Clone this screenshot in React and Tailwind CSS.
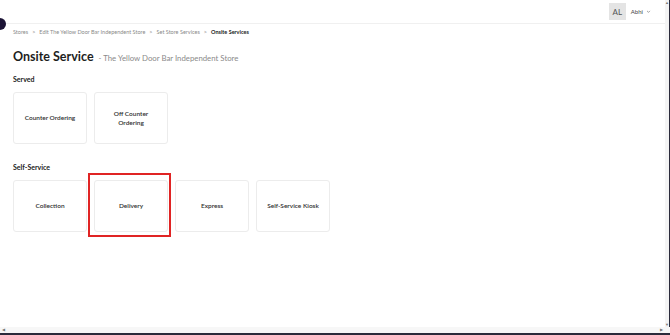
// Onsite Service picker - store services settings page

const SERVED = [
  { id: "counter", label: "Counter Ordering" },
  { id: "off-counter", label: "Off Counter Ordering", wrap: true },
];

const SELF_SERVICE = [
  { id: "collection", label: "Collection" },
  { id: "delivery", label: "Delivery", highlighted: true },
  { id: "express", label: "Express" },
  { id: "kiosk", label: "Self-Service Kiosk" },
];

const CRUMBS = [
  "Stores",
  "Edit The Yellow Door Bar Independent Store",
  "Set Store Services",
];

const ServiceCard = ({ label, wrap, highlighted }) => (
  <div className="relative">
    <div className="w-[74px] h-[52px] rounded-[3px] border border-[#ececec] bg-white flex items-center justify-center px-[2px]">
      <span
        className={`text-[6.5px] font-semibold text-[#2f2f2f] text-center leading-[9px] ${wrap ? "w-[40px]" : "whitespace-nowrap"}`}
      >
        {label}
      </span>
    </div>
    {/* annotation box */}
    {highlighted && (
      <div className="absolute -left-[6px] -right-[3px] -top-[7px] -bottom-[5px] border-2 border-[#e02424] pointer-events-none" />
    )}
  </div>
);

const Section = ({ title, items }) => (
  <div>
    <p className="text-[7px] font-bold text-[#222] leading-none">{title}</p>
    <div className="flex gap-[7px] mt-[9px]">
      {items.map((item) => (
        <ServiceCard key={item.id} {...item} />
      ))}
    </div>
  </div>
);

export default function App() {
  return (
    <div className="w-[670px] h-[335px] flex flex-col bg-white overflow-hidden font-['Lato','Liberation_Sans',sans-serif]">
      <div className="flex flex-1 min-h-0">
        <div className="relative flex-1 min-w-0">
          {/* Header */}
          <header className="h-[24px] border-b border-[#f0f0f0] flex items-center justify-end pr-[14px]">
            <div className="w-[17px] h-[17px] bg-[#e4e4e4] flex items-center justify-center text-[8px] text-[#555]">
              AL
            </div>
            <span className="ml-[5px] text-[6px] text-[#444]">Abhi</span>
            <svg
              className="ml-[3px] w-[5px] h-[5px] text-[#666]"
              fill="none"
              stroke="currentColor"
              viewBox="0 0 24 24"
            >
              <path strokeWidth={3} d="M5 9l7 7 7-7" />
            </svg>
          </header>

          {/* Sidebar toggle dot */}
          <div className="absolute -left-[6px] top-[18px] w-[12px] h-[12px] rounded-full bg-[#1b1335]" />

          <main className="pl-[13px] pt-[5px]">
            {/* Breadcrumb */}
            <nav className="flex items-center text-[5.5px] text-[#8a8a8a] h-[7px]">
              {CRUMBS.map((c) => (
                <span key={c} className="flex items-center">
                  <span>{c}</span>
                  <span className="mx-[4px]">&gt;</span>
                </span>
              ))}
              <span className="font-bold text-[#222]">Onsite Services</span>
            </nav>

            {/* Title */}
            <div className="flex items-baseline mt-[15px]">
              <h1 className="text-[12.5px] font-bold text-[#1e1e1e] leading-none">
                Onsite Service
              </h1>
              <span className="ml-[5px] text-[7.8px] text-[#8a8a8a]">
                - The Yellow Door Bar Independent Store
              </span>
            </div>

            <div className="mt-[11px] flex flex-col gap-[20px]">
              <Section title="Served" items={SERVED} />
              <Section title="Self-Service" items={SELF_SERVICE} />
            </div>
          </main>
        </div>

        {/* Vertical scrollbar */}
        <div className="w-[5px] bg-[#f4f4f4] border-r border-[#2b2b3b] flex flex-col items-center pt-[1px]">
          <span className="text-[4px] leading-none text-[#777]">▲</span>
          <div className="flex-1" />
          <span className="text-[4px] leading-none text-[#777]">▼</span>
        </div>
      </div>

      {/* Horizontal scrollbar */}
      <div className="h-[8px] bg-[#f7f7f7] border-b-2 border-[#2b2b3b] flex items-center justify-between px-[2px]">
        <span className="text-[4px] leading-none text-[#777]">◀</span>
        <span className="text-[4px] leading-none text-[#777] mr-[5px]">▶</span>
      </div>
    </div>
  );
}
